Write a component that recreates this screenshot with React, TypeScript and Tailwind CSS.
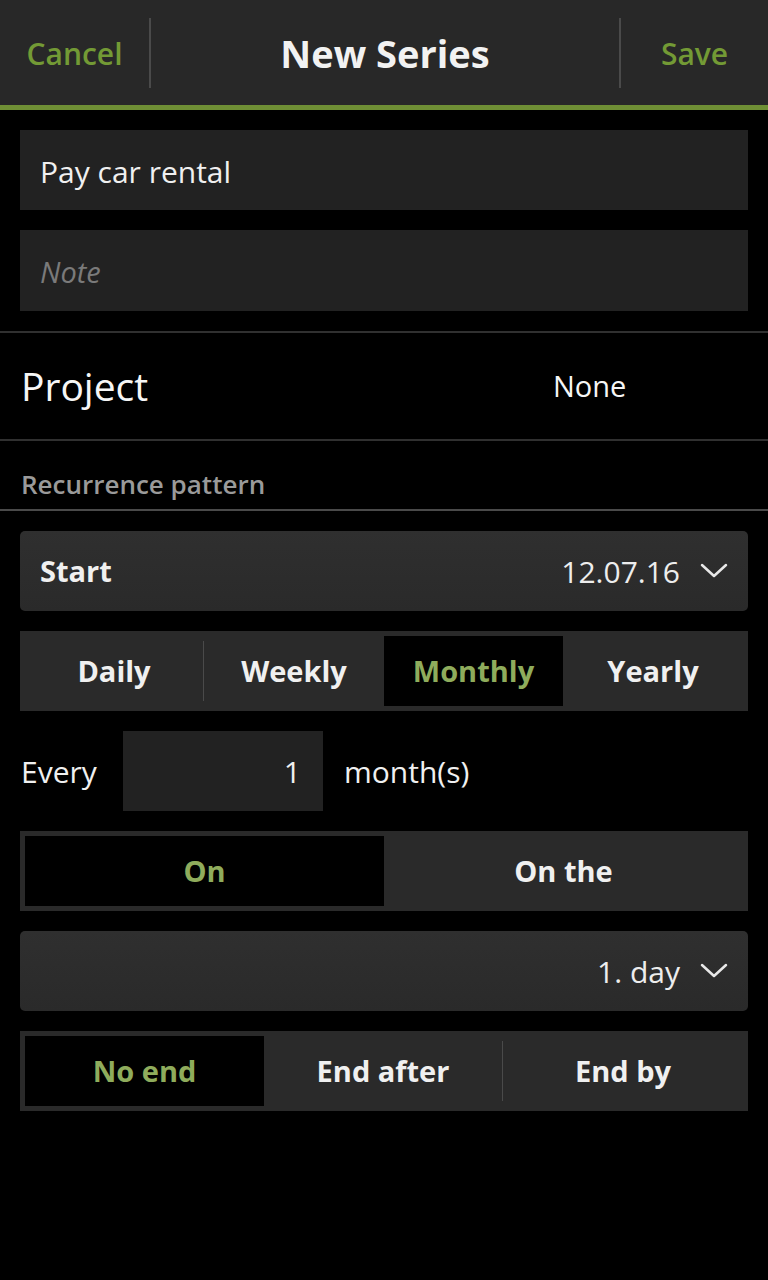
import React from "react";

const Chevron = () => (
  <svg width="28" height="16" viewBox="0 0 28 16" className="ml-5">
    <path d="M2 2 L14 13 L26 2" stroke="#e8e8e8" strokeWidth="2.5" fill="none" strokeLinecap="round" strokeLinejoin="round" />
  </svg>
);

export default function App() {
  const font = { fontFamily: '"Open Sans", "Noto Sans", sans-serif' };
  return (
    <div className="w-[768px] h-[1280px] bg-black text-[#f0f0f0] overflow-hidden" style={font}>
      {/* Header */}
      <div className="h-[110px] bg-[#282828] border-b-[5px] border-[#6f8f35] flex items-center">
        <div className="w-[149px] flex justify-center pt-[2px] text-[30px] font-semibold text-[#739a35]">Cancel</div>
        <div className="w-[2px] h-[70px] bg-[#4a4a4a]" />
        <div className="flex-1 flex justify-center pt-[2px] text-[38px] font-bold text-[#f2f2f2]">New Series</div>
        <div className="w-[2px] h-[70px] bg-[#4a4a4a]" />
        <div className="w-[147px] flex justify-center pt-[2px] text-[30px] font-semibold text-[#739a35]">Save</div>
      </div>

      <div className="px-5 pt-5 flex flex-col gap-5">
        <div className="h-[80px] bg-[#222222] flex items-center px-[20px] pt-[2px] text-[30px] text-[#f0f0f0]">Pay car rental</div>
        <div className="h-[81px] bg-[#222222] flex items-center px-[20px] pt-[2px] text-[29px] italic text-[#7a7a7a]">Note</div>
      </div>

      <div className="mt-5 h-[2px] bg-[#303030]" />
      <div className="h-[106px] flex items-center px-[21px]">
        <div className="text-[39px] text-[#f6f6f6] w-[532px]">Project</div>
        <div className="text-[29px] text-[#f6f6f6]">None</div>
      </div>
      <div className="h-[2px] bg-[#303030]" />
      <div className="h-[68px] flex items-end pb-[5px] px-[21px] text-[26px] font-semibold text-[#9a9a9a]">Recurrence pattern</div>
      <div className="h-[2px] bg-[#4a4a4a]" />

      <div className="px-5 pt-5 flex flex-col gap-5">
        {/* Start */}
        <div className="h-[80px] rounded-[5px] bg-gradient-to-b from-[#2f2f2f] to-[#2a2a2a] flex items-center pl-5 pr-[20px]">
          <div className="flex-1 text-[29px] font-bold">Start</div>
          <div className="text-[30px] text-[#ededed]">12.07.16</div>
          <Chevron />
        </div>

        {/* Daily / Weekly / Monthly / Yearly */}
        <div className="h-[80px] bg-[#2a2a2a] flex items-stretch p-[5px] text-[29px] font-bold">
          <div className="w-[178px] flex items-center justify-center">Daily</div>
          <div className="w-[1px] my-[5px] bg-[#4a4a4a]" />
          <div className="w-[180px] flex items-center justify-center">Weekly</div>
          <div className="w-[179px] flex items-center justify-center bg-black text-[#8fac5c]">Monthly</div>
          <div className="flex-1 flex items-center justify-center">Yearly</div>
        </div>

        {/* Every */}
        <div className="h-[80px] flex items-center">
          <div className="w-[103px] pl-[1px] text-[30px]">Every</div>
          <div className="w-[200px] h-[80px] bg-[#222222] flex items-center justify-end pr-[22px] text-[30px]">1</div>
          <div className="ml-[21px] text-[30px]">month(s)</div>
        </div>

        {/* On / On the */}
        <div className="h-[80px] bg-[#2a2a2a] flex items-stretch p-[5px] text-[29px] font-bold">
          <div className="w-[359px] flex items-center justify-center bg-black text-[#8fac5c]">On</div>
          <div className="flex-1 flex items-center justify-center">On the</div>
        </div>

        {/* 1. day */}
        <div className="h-[80px] rounded-[5px] bg-gradient-to-b from-[#2f2f2f] to-[#2a2a2a] flex items-center justify-end pr-[20px]">
          <div className="text-[30px] text-[#ededed]">1. day</div>
          <Chevron />
        </div>

        {/* End */}
        <div className="h-[80px] bg-[#2a2a2a] flex items-stretch p-[5px] text-[29px] font-bold">
          <div className="w-[239px] flex items-center justify-center bg-black text-[#8fac5c]">No end</div>
          <div className="w-[238px] flex items-center justify-center">End after</div>
          <div className="w-[1px] my-[5px] bg-[#4a4a4a]" />
          <div className="flex-1 flex items-center justify-center">End by</div>
        </div>
      </div>
    </div>
  );
}
